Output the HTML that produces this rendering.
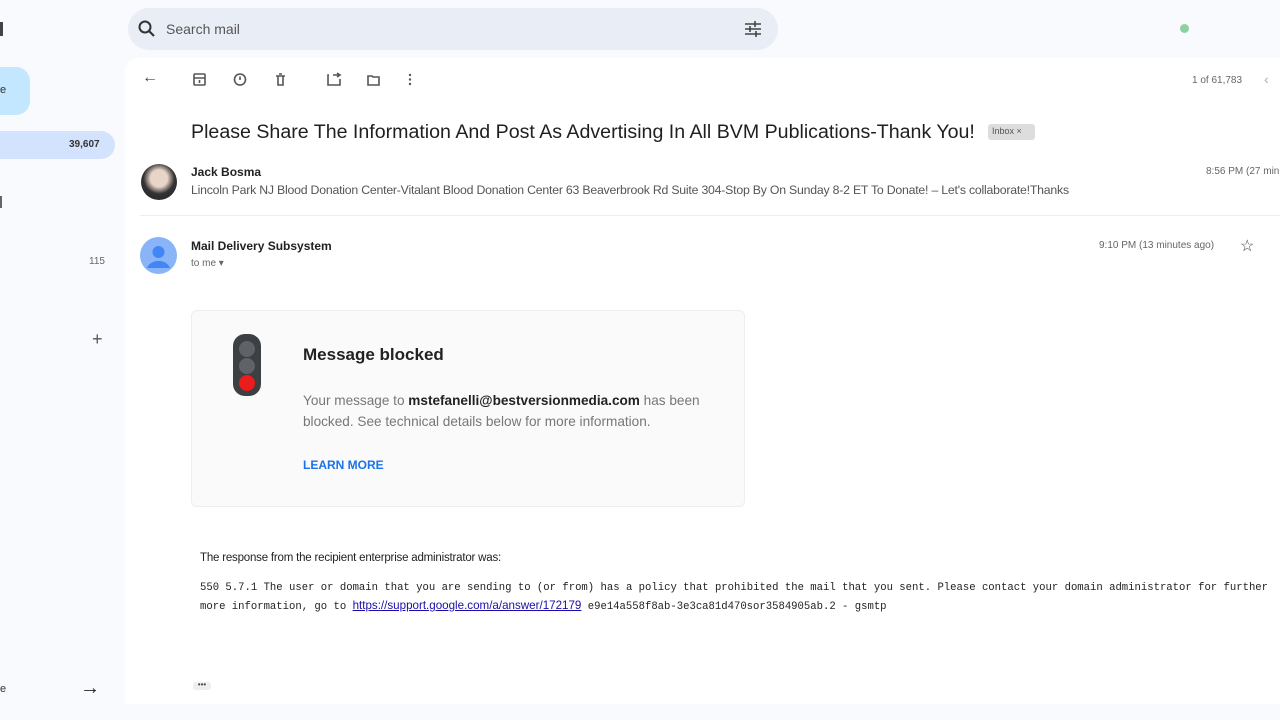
<!DOCTYPE html>
<html><head><meta charset="utf-8"><style>
*{margin:0;padding:0;box-sizing:border-box}
body{width:1280px;height:720px;overflow:hidden;background:#f8fafd;font-family:"Liberation Sans",sans-serif;position:relative;color:#1f1f1f}
.a{position:absolute}
.main{left:125px;top:58px;width:1160px;height:646px;background:#fff;border-radius:14px 0 0 0}
.ic{stroke:#555;fill:none;stroke-width:1.6}
</style></head><body>
<div class="a" style="left:0;top:22px;width:3px;height:14px;background:#444"></div>
<div class="a" style="left:-20px;top:67px;width:50px;height:48px;background:#c2e7ff;border-radius:14px"></div>
<div class="a" style="left:0;top:84px;font-size:11px;color:#333">e</div>
<div class="a" style="left:-20px;top:131px;width:135px;height:28px;background:#d3e3fd;border-radius:14px"></div>
<div class="a" style="left:69px;top:139px;font-size:10px;font-weight:bold;color:#333">39,607</div>
<div class="a" style="left:0;top:196px;width:2px;height:12px;background:#666"></div>
<div class="a" style="left:89px;top:256px;font-size:10px;color:#666">115</div>
<div class="a" style="left:92px;top:329px;font-size:18px;color:#555">+</div>
<div class="a" style="left:0;top:683px;font-size:11px;color:#333">e</div>
<div class="a" style="left:80px;top:677px;font-size:20px;color:#222">→</div>
<div class="a" style="left:128px;top:8px;width:650px;height:42px;background:#e9eef6;border-radius:21px"></div>
<svg class="a" style="left:137px;top:19px" width="20" height="20"><circle cx="8" cy="8" r="5.5" stroke="#333" stroke-width="2" fill="none"/><path d="M12 12l5 5" stroke="#333" stroke-width="2.2"/></svg>
<div class="a" style="left:166px;top:21px;font-size:14px;color:#555">Search mail</div>
<svg class="a" style="left:744px;top:20px" width="18" height="18" stroke="#444" stroke-width="1.6"><path d="M1 4h16M1 9h16M1 14h16"/><path d="M11 1v6M6 6v6M12 11v6"/></svg>
<div class="a" style="left:1180px;top:24px;width:9px;height:9px;border-radius:50%;background:#8fd19e"></div>
<div class="main a"></div>
<div class="a" style="left:142px;top:69px;font-size:16px;color:#444">←</div>
<svg class="a" style="left:192px;top:72px" width="230" height="16">
<rect class="ic" x="2" y="2" width="11" height="11" rx="1"/><path class="ic" d="M2 6h11M7.5 8v3"/>
<circle class="ic" cx="48" cy="7.5" r="5.5"/><path class="ic" d="M48 4.5v3.5"/>
<path class="ic" d="M84 4h9M86 4v9h5V4M87 2h3"/>
<path class="ic" d="M137 3h-1v10h12V7M141 3l6 0M145 1l3 2-3 2"/>
<path class="ic" d="M176 4h4l1 1h6v8h-11z"/>
<circle cx="218" cy="3" r="1.2" fill="#555"/><circle cx="218" cy="7.5" r="1.2" fill="#555"/><circle cx="218" cy="12" r="1.2" fill="#555"/>
</svg>
<div class="a" style="left:1192px;top:75px;font-size:10px;color:#666">1 of 61,783</div>
<div class="a" style="left:1264px;top:71px;font-size:14px;color:#aaa">‹</div>
<div class="a" style="left:191px;top:121px;font-size:19.6px;color:#1f1f1f;white-space:nowrap">Please Share The Information And Post As Advertising In All BVM Publications-Thank You!</div>
<div class="a" style="left:988px;top:124px;width:47px;height:16px;background:#ddd;border-radius:3px;font-size:9px;color:#555;padding:2px 4px">Inbox ×</div>
<div class="a" style="left:141px;top:164px;width:36px;height:36px;border-radius:50%;background:radial-gradient(circle at 50% 40%,#e8d5c8 0 30%,#333 55%,#222)"></div>
<div class="a" style="left:191px;top:165px;font-size:12px;font-weight:bold;color:#222">Jack Bosma</div>
<div class="a" style="left:191px;top:183px;font-size:12.3px;color:#555;white-space:nowrap;letter-spacing:-0.22px">Lincoln Park NJ Blood Donation Center-Vitalant Blood Donation Center 63 Beaverbrook Rd Suite 304-Stop By On Sunday 8-2 ET To Donate! – Let's collaborate!Thanks</div>
<div class="a" style="left:1206px;top:166px;font-size:10px;color:#666;white-space:nowrap">8:56 PM (27 min</div>
<div class="a" style="left:140px;top:215px;width:1140px;height:1px;background:#eee"></div>
<svg class="a" style="left:140px;top:237px" width="37" height="37"><circle cx="18.5" cy="18.5" r="18.5" fill="#8ab4f8"/><circle cx="18.5" cy="15" r="6" fill="#4285f4"/><path d="M7 31a12 10 0 0 1 23 0z" fill="#4285f4"/></svg>
<div class="a" style="left:191px;top:239px;font-size:12px;font-weight:bold;color:#222">Mail Delivery Subsystem</div>
<div class="a" style="left:191px;top:258px;font-size:10px;color:#666">to me ▾</div>
<div class="a" style="left:1099px;top:240px;font-size:10px;color:#666">9:10 PM (13 minutes ago)</div>
<div class="a" style="left:1240px;top:236px;font-size:16px;color:#444">☆</div>
<div class="a" style="left:191px;top:310px;width:554px;height:197px;background:#fafafa;border:1px solid #eee;border-radius:6px"></div>
<div class="a" style="left:233px;top:334px;width:28px;height:62px;background:#3c4043;border-radius:12px"></div>
<div class="a" style="left:239px;top:341px;width:16px;height:16px;border-radius:50%;background:#5f6368"></div>
<div class="a" style="left:239px;top:358px;width:16px;height:16px;border-radius:50%;background:#5f6368"></div>
<div class="a" style="left:239px;top:375px;width:16px;height:16px;border-radius:50%;background:#ea1c1c"></div>
<div class="a" style="left:303px;top:345px;font-size:17px;font-weight:bold;color:#222">Message blocked</div>
<div class="a" style="left:303px;top:390px;width:440px;font-size:13.6px;line-height:21px;color:#777">Your message to <b style="color:#222">mstefanelli@bestversionmedia.com</b> has been blocked. See technical details below for more information.</div>
<div class="a" style="left:303px;top:458px;font-size:12px;font-weight:bold;color:#1a73e8">LEARN MORE</div>
<div class="a" style="left:200px;top:552px;font-size:11.5px;color:#222;letter-spacing:-0.2px;white-space:nowrap">The response from the recipient enterprise administrator was:</div>
<div class="a" style="left:200px;top:580px;font-family:'Liberation Mono',monospace;font-size:10.6px;line-height:17px;color:#222;white-space:pre">550 5.7.1 The user or domain that you are sending to (or from) has a policy that prohibited the mail that you sent. Please contact your domain administrator for further
more information, go to <span style="color:#1a0dab;text-decoration:underline;font-family:'Liberation Sans';font-size:11.6px">https://support.google.com/a/answer/172179</span> e9e14a558f8ab-3e3ca81d470sor3584905ab.2 - gsmtp</div>
<div class="a" style="left:193px;top:682px;width:18px;height:8px;background:#eee;border-radius:3px;font-size:8px;line-height:6px;text-align:center;color:#444">•••</div>
</body></html>
